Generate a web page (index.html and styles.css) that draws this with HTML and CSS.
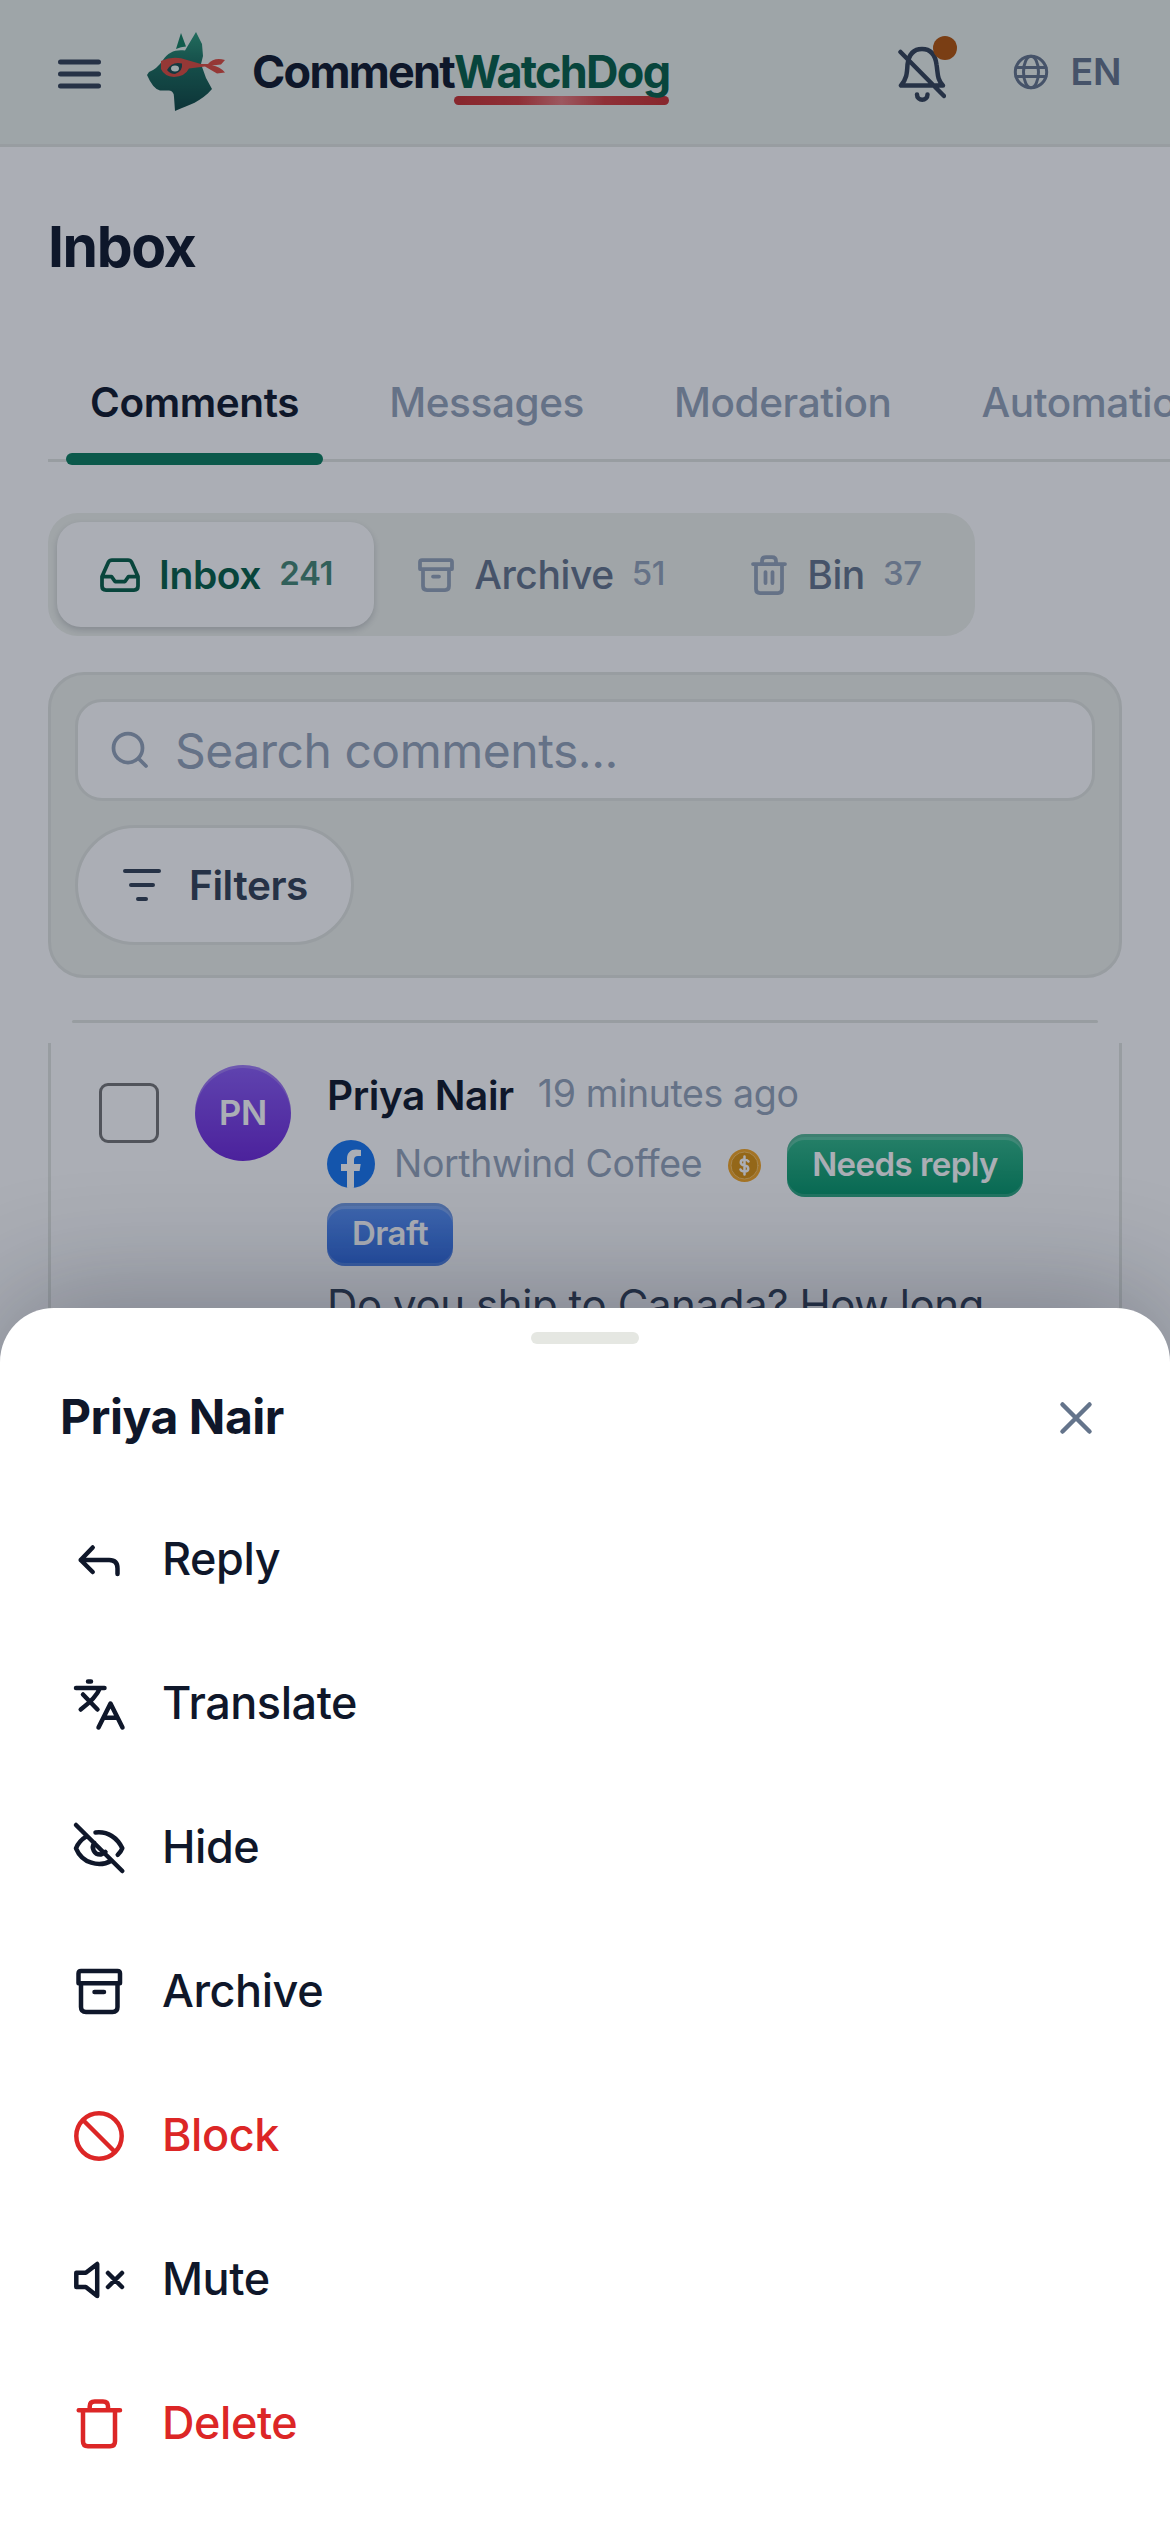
FILE: index.html
```html
<!DOCTYPE html>
<html lang="en">
<head>
<meta charset="utf-8">
<title>Inbox – CommentWatchDog</title>
<link rel="stylesheet" href="styles.css">
</head>
<body>
<div class="app">
  <header class="topbar">
    <svg class="menu" width="43" height="30" viewBox="0 0 43 30"><path d="M2.500 3h38M2.500 15h38M2.500 27h38"/></svg>
    <svg class="logo" width="80" height="80" viewBox="0 0 80 80">
      <defs>
        <linearGradient id="fur" x1="0" y1="0" x2="0" y2="1"><stop offset="0" stop-color="#2c9a78"/><stop offset=".4" stop-color="#1b6e5c"/><stop offset="1" stop-color="#0c443f"/></linearGradient>
      </defs>
      <path fill="#14805f" d="M29 17 34 1l5 13.500q-5 0-10 2.500z"/>
      <path fill="url(#fur)" d="M16 28C21 20 29 17 38 18.500L49 0l6 12 1 12-2 8 5 14 6 11C54 70 42 73 28 79l-1-14q0-6-5-6.500l-9 0Q6 57 0 43l2-3q8-3 14-12z"/>
      <path fill="#de4a3d" d="M14 29q13-6 26-1l14 4h7q6-7 17-4l-4 4.500-9 1q8 1 13 7l-8 1-12-7-16 2q-4 8-15 8.500-10-1-13-8z"/>
      <path fill="#164b4c" d="M20 38q5-9 15-6.500 1 8-7 10.500-5 0-8-4z"/>
      <ellipse cx="28" cy="36.500" rx="4" ry="3" fill="#e9f3ef"/>
    </svg>
    <div class="brand"><span>Comment</span><span class="brand-accent">WatchDog</span></div>
    <div class="bell">
      <svg width="48" height="60" viewBox="0 0 48 60"><path d="M3 43.500h42c-6-6-5-12-6.500-21C37 11 31 7 24 7s-13 4-14.500 15.500C9 32 8.500 37 3 43.500zM2.500 10 46 54M19 52.500c0 7 10.500 7 10.500 0"/></svg>
      <i class="dot"></i>
    </div>
    <svg class="globe" width="36" height="36" viewBox="0 0 36 36"><circle cx="18" cy="18" r="15.700"/><ellipse cx="18" cy="18" rx="7.500" ry="15.700"/><path d="M3 13.500h30M3 22.500h30"/></svg>
    <span class="lang">EN</span>
  </header>

  <main>
    <h1>Inbox</h1>
    <nav class="tabs">
      <a class="tab active">Comments</a><a class="tab">Messages</a><a class="tab">Moderation</a><a class="tab">Automation</a>
    </nav>

    <div class="segments">
      <div class="segment selected">
        <svg width="42" height="36" viewBox="0 0 42 36"><path d="M3 19.500 9.500 5Q10.500 3 13 3h16q2.500 0 3.500 2L39 19.500V29q0 4-4 4H7q-4 0-4-4zM3 19.500h9.500l3.500 5h10l3.500-5H39"/></svg>
        <span>Inbox</span><small>241</small>
      </div>
      <div class="segment">
        <svg width="36" height="36" viewBox="0 0 36 36"><path d="M4 3h28q2 0 2 2v7H2V5q0-2 2-2zM5 12v17q0 4 4 4h18q4 0 4-4V12M15 19.500h6"/></svg>
        <span>Archive</span><small>51</small>
      </div>
      <div class="segment">
        <svg width="36" height="42" viewBox="0 0 36 42"><path d="M2 10h32M5 10v25q0 4 4 4h18q4 0 4-4V10M11 10V7q0-4 4-4h6q4 0 4 4v3M14.500 18v11M21.500 18v11"/></svg>
        <span>Bin</span><small>37</small>
      </div>
    </div>

    <section class="search-panel">
      <div class="search">
        <svg width="38" height="38" viewBox="0 0 38 38"><circle cx="17" cy="17" r="14.500"/><path d="m27.500 27.500 7.500 7.500"/></svg>
        <span>Search comments...</span>
      </div>
      <button class="filters">
        <svg width="38" height="34" viewBox="0 0 38 34"><path d="M2 3h34M8 17h22M15 31h8"/></svg>
        <span>Filters</span>
      </button>
    </section>

    <div class="list-edge"></div>
    <article class="comment">
      <i class="checkbox"></i>
      <div class="avatar">PN</div>
      <div class="content">
        <div class="author"><b>Priya Nair</b><span>19 minutes ago</span></div>
        <div class="meta">
          <svg class="fb" width="48" height="48" viewBox="0 0 48 48"><circle cx="24" cy="24" r="24" fill="#1877f2"/><path fill="#fff" d="M20 47.700V31h-6v-7h6v-5.300C20 12.700 23.600 9.400 29 9.400q2.600 0 5 .5v6h-3q-4 0-4 4V24h6.700l-1.100 7H27v16.700q-3.500.5-7 0z"/></svg>
          <span class="page">Northwind Coffee</span>
          <svg class="coin" width="33" height="33" viewBox="0 0 33 33"><circle cx="16.500" cy="16.500" r="16.500" fill="#f5a623"/><circle cx="16.500" cy="16.500" r="13.500" fill="#dc920f" stroke="#f9c463" stroke-width="1"/><path fill="none" stroke="#fff" stroke-width="2.500" stroke-linecap="round" d="M20.500 12.500c-1-1.500-2.300-2-4-2-5 0-5 5.500 0 6s5 6 0 6c-2 0-3.500-.8-4-2M16.500 7.500v18"/></svg>
          <span class="badge green">Needs reply</span>
          <span class="badge blue">Draft</span>
        </div>
        <p>Do you ship to Canada? How long</p>
      </div>
    </article>
  </main>
</div>

<div class="scrim"></div>

<section class="sheet">
  <i class="handle"></i>
  <header class="sheet-head">
    <h2>Priya Nair</h2>
    <svg width="36" height="36" viewBox="0 0 36 36"><path d="m4.500 4.500 27 27M31.500 4.500l-27 27"/></svg>
  </header>
  <ul>
    <li><svg width="54" height="54" viewBox="0 0 54 54"><path d="M20.700 14.500 8.700 27l12 12M8.700 27h28.500q8.300 0 8.300 8.500V41"/></svg><span>Reply</span></li>
    <li><svg width="54" height="54" viewBox="0 0 54 54"><path d="M4 11h28.500M16 4.500h3M28 11Q24 21 8.700 32.500M11 17.500l14.500 15M26.500 50.500l12-24 12 24M31.500 40.700h14"/></svg><span>Translate</span></li>
    <li><svg width="54" height="54" viewBox="0 0 54 54"><path d="m4 4 46.300 46M23.500 11.500C36 10 45.500 17 50.300 27.300q-1.300 3.500-4.600 6.500M14 15.700Q7 20 4 27.300C10 42 27 47 39.700 39.500M22.500 22c-4 5 0 12 6.500 11.500q3-.5 4.500-2.500"/></svg><span>Hide</span></li>
    <li><svg width="54" height="54" viewBox="0 0 54 54"><path d="M9 6h36.500q2.500 0 2.500 2.500v9.800H6.500V8.500Q6.500 6 9 6zM9 18.300V42q0 5 5 5h26.500q5 0 5-5V18.300M22.500 27H32"/></svg><span>Archive</span></li>
    <li class="danger"><svg width="54" height="54" viewBox="0 0 54 54"><circle cx="27" cy="27" r="22.700"/><path d="m11.500 11.500 31 31"/></svg><span>Block</span></li>
    <li><svg width="54" height="54" viewBox="0 0 54 54"><path d="M4.300 19.700h9.500L25.200 11v32l-11.400-9H4.300zM36 20l14 14M50 20 36 34"/></svg><span>Mute</span></li>
    <li class="danger"><svg width="54" height="54" viewBox="0 0 54 54"><path d="M6.700 13.300H48M11 13.300v31q0 5 5 5h22q5 0 5-5v-31M17.700 13.300V9.500q0-5 5-5H31q5 0 5 5v3.800"/></svg><span>Delete</span></li>
  </ul>
</section>
</body>
</html>
```
FILE: styles.css
```css
* { box-sizing: border-box; }
body { margin: 0; width: 1170px; height: 2532px; overflow: hidden; position: relative; background: #fff; color: #0f172a; font-family: Inter, sans-serif; letter-spacing: -.01em; }
.app * , .sheet * { letter-spacing: -.01em; }
svg { flex: none; fill: none; stroke: currentColor; stroke-linecap: round; stroke-linejoin: round; }
svg.logo, svg.fb, svg.coin { stroke: none; }
i { display: block; flex: none; }
.app { width: 1170px; overflow: hidden; }

.topbar { display: flex; align-items: center; height: 147px; padding: 0 49px 0 58px; background: #ebf1ec; border-bottom: 3px solid #e2e5e0; }
.menu { color: #334155; stroke-width: 5; margin: 3px 46px 0 0; }
.logo { margin-right: 25px; }
.brand { display: flex; isolation: isolate; font-size: 45px; line-height: 60px; font-weight: 700; }
.brand span { letter-spacing: -1.750px; }
.brand-accent { color: #065f46; position: relative; }
.brand-accent::after { content: ""; position: absolute; left: 0; right: 0; bottom: -3px; height: 9px; border-radius: 5px; background: linear-gradient(90deg, #c9302f, #d43d3d 30%, #e87c7c 50%, #d43d3d 70%, #c9302f); z-index: -1; }
.bell { position: relative; display: flex; margin-left: auto; color: #334155; stroke-width: 4.500; }
.dot { position: absolute; left: 35px; top: -6px; width: 24px; height: 24px; border-radius: 50%; background: #b45309; }
.globe { margin-left: 67px; color: #64748b; stroke-width: 3; }
.lang { margin-left: 22px; padding-bottom: 1px; font-size: 37.500px; font-weight: 600; color: #64748b; }

main { padding: 0 48px; }
h1 { margin: 64px 0 0; font-size: 57px; line-height: 72px; font-weight: 700; }
.app h1 { letter-spacing: -1.400px; }
.tabs { display: flex; margin: 62px -48px 0 0; height: 117px; padding-left: 18px; border-bottom: 3px solid #e2e5e0; }
.tab { position: relative; flex: none; padding: 34px 24px 0; margin-right: 42px; font-size: 40.500px; line-height: 48px; font-weight: 500; color: #94a3b8; }
.tab.active { color: #0f172a; font-weight: 600; }
.tab.active::after { content: ""; position: absolute; left: 0; right: 0; bottom: -6px; height: 12px; border-radius: 6px; background: #0a7d5c; }

.segments { display: flex; width: 927px; height: 123px; margin-top: 51px; padding: 9px; border-radius: 30px; background: #eef1eb; }
.segment { display: flex; align-items: center; padding: 0 42px 0 44px; font-size: 39px; font-weight: 500; color: #64748b; }
.segment svg { stroke-width: 3.750; margin-right: 20px; color: #94a3b8; }
.segment small { margin-left: 18px; padding-bottom: 4px; font-size: 33px; color: #94a3b8; }
.selected { padding: 0 41px 0 42px; background: #fff; border-radius: 24px; color: #065f46; font-weight: 600; box-shadow: 0 3px 6px rgba(15,23,42,.18); }
.selected svg, .selected small { color: inherit; }
.segment.selected svg { margin-right: 18px; color: inherit; }
.segment.selected small { color: inherit; opacity: .75; }

.search-panel { height: 306px; margin-top: 36px; padding: 24px; border: 3px solid #e2e5e0; border-radius: 36px; background: #eef1eb; }
.search { display: flex; align-items: center; height: 102px; padding-left: 33px; border: 3px solid #e2e5e0; border-radius: 27px; background: #fff; font-size: 48px; color: #94a3b8; }
.search svg { stroke-width: 3.750; margin-right: 26px; }
.filters { display: flex; align-items: center; width: 279px; height: 120px; margin-top: 24px; padding: 0 0 0 45px; border: 3px solid #e2e5e0; border-radius: 60px; background: #fff; font: 600 40.500px Inter, sans-serif; color: #334155; }
.filters svg { stroke-width: 4; margin-right: 28px; }

.list-edge { height: 3px; margin: 42px 24px 20px; border-radius: 2px; background: #e2e5e0; }
.comment { display: flex; height: 400px; padding: 22px 48px 0; border: solid #e2e5e0; border-width: 0 3px; }
.checkbox { width: 60px; height: 60px; margin-top: 18px; border: 3px solid #767676; border-radius: 9px; background: #fff; }
.avatar { flex: none; width: 96px; height: 96px; margin: 0 36px; border-radius: 50%; background: linear-gradient(#8b5cf6, #6d28d9); box-shadow: inset 0 3px 0 rgba(255,255,255,.2); color: #fff; font-size: 34.500px; line-height: 96px; text-align: center; font-weight: 600; }
.content { flex: 1; }
.author { display: flex; align-items: center; gap: 24px; height: 60px; font-size: 37.500px; color: #94a3b8; }
.author span { padding-bottom: 3px; }
.author b { font-size: 40.500px; font-weight: 600; color: #0f172a; }
.meta { display: flex; flex-wrap: wrap; align-items: center; row-gap: 6px; margin-top: 9px; font-size: 37.500px; color: #94a3b8; }
.fb { margin-bottom: 3px; }
.page { margin: 0 26px 0 19px; padding-bottom: 5px; }
.coin { margin-right: 26px; }
.badge { height: 63px; padding: 0 25px; border-radius: 18px; color: #fff; font-size: 33px; line-height: 60px; font-weight: 600; box-shadow: inset 0 3px 0 rgba(0,0,0,.08), inset 0 6px 0 rgba(255,255,255,.22), inset 0 -3px 0 rgba(255,255,255,.15); }
.meta .badge { letter-spacing: -.017em; }
.green { background: linear-gradient(#34b98a, #059669); }
.blue { background: linear-gradient(#5b93f5, #2f6be0); }
.content p { margin: 9px 0 0; font-size: 42px; line-height: 60px; color: #334155; white-space: nowrap; }

.scrim { position: absolute; inset: 0; background: rgba(15,23,42,.35); }
.sheet { position: absolute; left: 0; right: 0; bottom: 0; height: 1224px; padding-top: 24px; border-radius: 54px 54px 0 0; background: #fff; box-shadow: 0 -12px 120px rgba(15,23,42,.3); }
.handle { width: 108px; height: 12px; margin: 0 auto; border-radius: 6px; background: #e5e7e2; }
.sheet-head { display: flex; align-items: center; justify-content: space-between; height: 147px; padding: 0 76px 0 60px; }
h2 { margin: 0; padding-bottom: 2px; font-size: 48px; font-weight: 700; }
.sheet-head svg { color: #64748b; stroke-width: 4.500; }
ul { list-style: none; margin: -3px 0 0; padding: 0 72px; }
li { display: flex; align-items: center; gap: 36px; height: 144px; font-size: 45px; font-weight: 500; }
li span { padding-bottom: 4px; }
li svg { stroke-width: 4.500; }
.danger { color: #dc2626; }
```
